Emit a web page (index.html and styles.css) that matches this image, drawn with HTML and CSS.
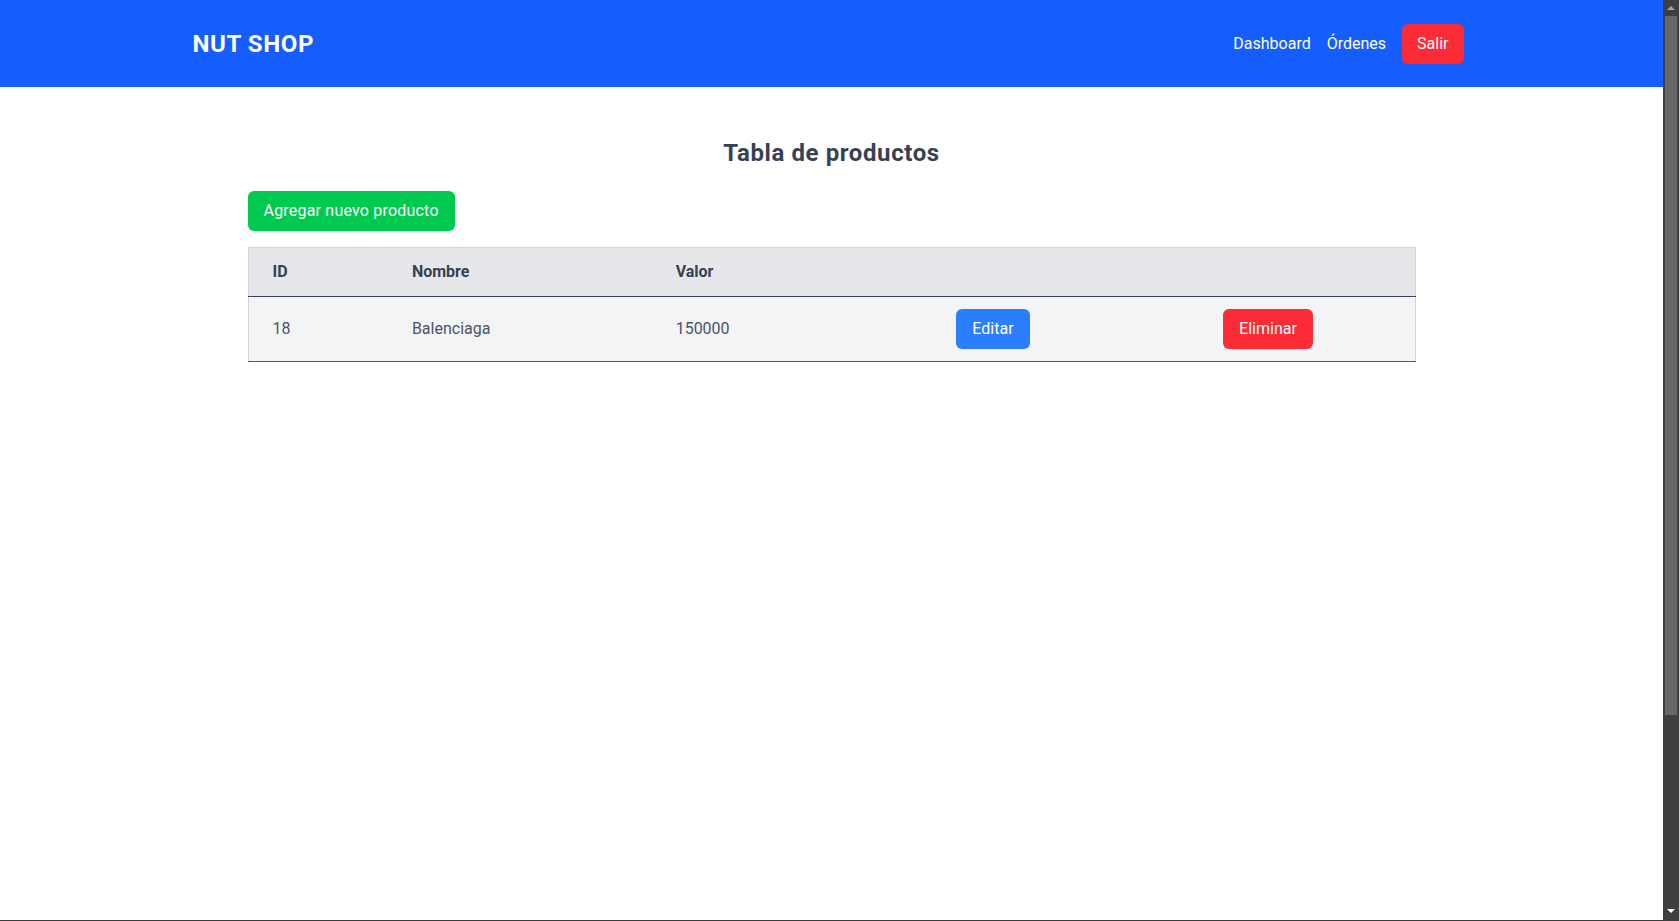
FILE: index.html
```html
<!DOCTYPE html>
<html lang="es">
<head>
<meta charset="utf-8">
<title>Nut Shop - Productos</title>
<link rel="stylesheet" href="styles.css">
</head>
<body>
<div class="page">
  <header class="navbar">
    <div class="nav-inner">
      <a class="brand" href="#">NUT SHOP</a>
      <nav class="nav-links">
        <a class="nav-link" href="#">Dashboard</a>
        <a class="nav-link" href="#">Órdenes</a>
        <button class="btn btn-red btn-nav">Salir</button>
      </nav>
    </div>
  </header>
  <main class="main">
    <h1 class="title">Tabla de productos</h1>
    <div class="content">
      <div class="toolbar">
        <button class="btn btn-green btn-add">Agregar nuevo producto</button>
      </div>
      <table class="products">
        <thead>
          <tr>
            <th class="c-id">ID</th>
            <th class="c-name">Nombre</th>
            <th class="c-value">Valor</th>
            <th class="c-edit"></th>
            <th class="c-del"></th>
          </tr>
        </thead>
        <tbody>
          <tr>
            <td>18</td>
            <td>Balenciaga</td>
            <td>150000</td>
            <td><button class="btn btn-blue">Editar</button></td>
            <td><button class="btn btn-red">Eliminar</button></td>
          </tr>
        </tbody>
      </table>
    </div>
  </main>
</div>
<div class="scrollbar" aria-hidden="true">
  <span class="arrow-up"></span>
  <span class="thumb"></span>
  <span class="arrow-down"></span>
</div>
<div class="frame-bottom" aria-hidden="true"></div>
</body>
</html>
```
FILE: styles.css
```css
* { box-sizing: border-box; }

html, body {
  margin: 0;
  padding: 0;
  background: #ffffff;
}

body {
  font-family: Roboto, "Liberation Sans", sans-serif;
  font-size: 16px;
  line-height: 24px;
  color: #364153;
  overflow: hidden;
}

.page {
  margin-right: 16px;
}

.navbar {
  background: #155dfc;
  height: 87px;
  display: flex;
  align-items: center;
}

.nav-inner {
  width: 1280px;
  margin: 0 auto;
  padding: 0 8px 0 1px;
  display: flex;
  align-items: center;
  justify-content: space-between;
}

.brand {
  color: #ffffff;
  font-size: 24px;
  font-weight: 700;
  line-height: 32px;
  letter-spacing: 0.6px;
  text-decoration: none;
}

.nav-links {
  display: flex;
  align-items: center;
  gap: 16px;
}

.nav-link {
  color: #ffffff;
  text-decoration: none;
}

.btn {
  font-family: inherit;
  font-size: 16px;
  line-height: 24px;
  border: none;
  border-radius: 6px;
  padding: 8px 16px;
  color: #ffffff;
  cursor: pointer;
}

.btn-nav { padding: 8px 15px; }
.btn-add { letter-spacing: 0.2px; }

.btn-red { background: #fb2c36; }
.btn-green { background: #00c950; }
.btn-blue { background: #2b7fff; }

.main {
  padding-top: 50px;
}

.title {
  margin: 0 0 22px;
  text-align: center;
  font-size: 24px;
  line-height: 32px;
  font-weight: 700;
  letter-spacing: 0.6px;
  color: #364153;
}

.content {
  width: 1168px;
  margin: 0 auto;
}

.toolbar {
  margin-bottom: 16px;
  display: flex;
}

.products {
  width: 100%;
  border-collapse: collapse;
  border: 1px solid #d1d5dc;
  border-bottom: 1px solid #4a5565;
  text-align: left;
}

.products th,
.products td {
  padding: 12px 24px;
}

.products thead tr {
  background: #e5e7eb;
  border-bottom: 1px solid #364153;
}

.products th {
  font-weight: 700;
  color: #364153;
}

.products tbody tr {
  background: #f3f4f6;
}

.products td {
  color: #4a5565;
}

.c-id { width: 140px; }
.c-name { width: 264px; }
.c-value { width: 281px; }
.c-edit { width: 267px; }
.c-del { width: 216px; }

.scrollbar {
  position: fixed;
  top: 0;
  right: 0;
  width: 16px;
  height: 100%;
  background: #3f3f3f;
}

.thumb {
  position: absolute;
  top: 16px;
  left: 2px;
  width: 12px;
  height: 699px;
  background: #686868;
}

.arrow-up {
  position: absolute;
  top: 6px;
  left: 4px;
  width: 0;
  height: 0;
  border-left: 4px solid transparent;
  border-right: 4px solid transparent;
  border-bottom: 4px solid #a3a3a3;
}

.arrow-down {
  position: absolute;
  bottom: 8px;
  left: 4px;
  width: 0;
  height: 0;
  border-left: 4px solid transparent;
  border-right: 4px solid transparent;
  border-top: 4px solid #ffffff;
}

.frame-bottom {
  position: fixed;
  left: 0;
  right: 16px;
  bottom: 0;
  height: 1px;
  background: #3c3c3c;
}
```
